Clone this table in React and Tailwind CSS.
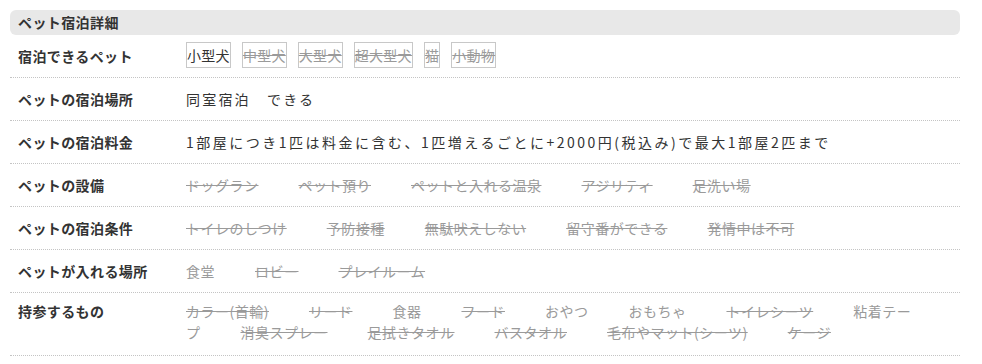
import React from "react";

const font = { fontFamily: '"Noto Sans CJK JP", "Noto Sans", sans-serif' };

function Item({ children, on, last }) {
  return (
    <span
      className={
        (on ? "text-[#9a9a9a] no-underline" : "text-[#9a9a9a] line-through decoration-[#9a9a9a]") +
        (last ? "" : " mr-[40px]")
      }
    >
      {children}
    </span>
  );
}

function Row({ label, children, tall }) {
  return (
    <div
      className={
        "flex border-b border-dotted border-[#c4c4c4] " +
        (tall ? "h-[63px] items-start pt-[8px]" : "h-[43px] items-center")
      }
    >
      <div className="w-[176px] shrink-0 pl-[8px] font-bold text-[14px] tracking-[0.4px] leading-[21px] text-[#333]">
        {label}
      </div>
      <div className="flex-1 pr-[34px] text-[14px] tracking-[0.5px] leading-[21px]">{children}</div>
    </div>
  );
}

export default function App() {
  const tags = [
    ["小型犬", true],
    ["中型犬", false],
    ["大型犬", false],
    ["超大型犬", false],
    ["猫", false],
    ["小動物", false],
  ];
  return (
    <div className="w-[982px] h-[364px] bg-white pt-[10px] pl-[10px]" style={font}>
      <div className="w-[950px]">
        <div className="h-[25px] rounded-[6px] bg-[#e8e8e8] pl-[8px] flex items-center font-bold text-[14px] tracking-[0.4px] text-[#333]">
          ペット宿泊詳細
        </div>
        <Row label="宿泊できるペット">
          <div className="flex items-center gap-[11px] -mt-[3px]">
            {tags.map(([t, on]) => (
              <span
                key={t}
                className={
                  "inline-block border border-[#c8c8c8] px-0 leading-[24px] tracking-[0.3px] " +
                  (on ? "text-[#333]" : "text-[#9a9a9a] line-through")
                }
              >
                {t}
              </span>
            ))}
          </div>
        </Row>
        <Row label="ペットの宿泊場所">
          <span className="text-[#333] tracking-[2.2px]">同室宿泊　できる</span>
        </Row>
        <Row label="ペットの宿泊料金">
          <span className="text-[#333] tracking-[2.5px]">
            1部屋につき1匹は料金に含む、1匹増えるごとに+2000円(税込み)で最大1部屋2匹まで
          </span>
        </Row>
        <Row label="ペットの設備">
          <Item>ドッグラン</Item>
          <Item>ペット預り</Item>
          <Item>ペットと入れる温泉</Item>
          <Item>アジリティ</Item>
          <Item last>足洗い場</Item>
        </Row>
        <Row label="ペットの宿泊条件">
          <Item>トイレのしつけ</Item>
          <Item>予防接種</Item>
          <Item>無駄吠えしない</Item>
          <Item>留守番ができる</Item>
          <Item last>発情中は不可</Item>
        </Row>
        <Row label="ペットが入れる場所">
          <Item on>食堂</Item>
          <Item>ロビー</Item>
          <Item last>プレイルーム</Item>
        </Row>
        <Row label="持参するもの" tall>
          <Item>カラー(首輪)</Item>
          <Item>リード</Item>
          <Item on>食器</Item>
          <Item>フード</Item>
          <Item on>おやつ</Item>
          <Item on>おもちゃ</Item>
          <Item>トイレシーツ</Item>
          <Item on>粘着テープ</Item>
          <Item>消臭スプレー</Item>
          <Item>足拭きタオル</Item>
          <Item>バスタオル</Item>
          <Item>毛布やマット(シーツ)</Item>
          <Item last>ケージ</Item>
        </Row>
      </div>
    </div>
  );
}
